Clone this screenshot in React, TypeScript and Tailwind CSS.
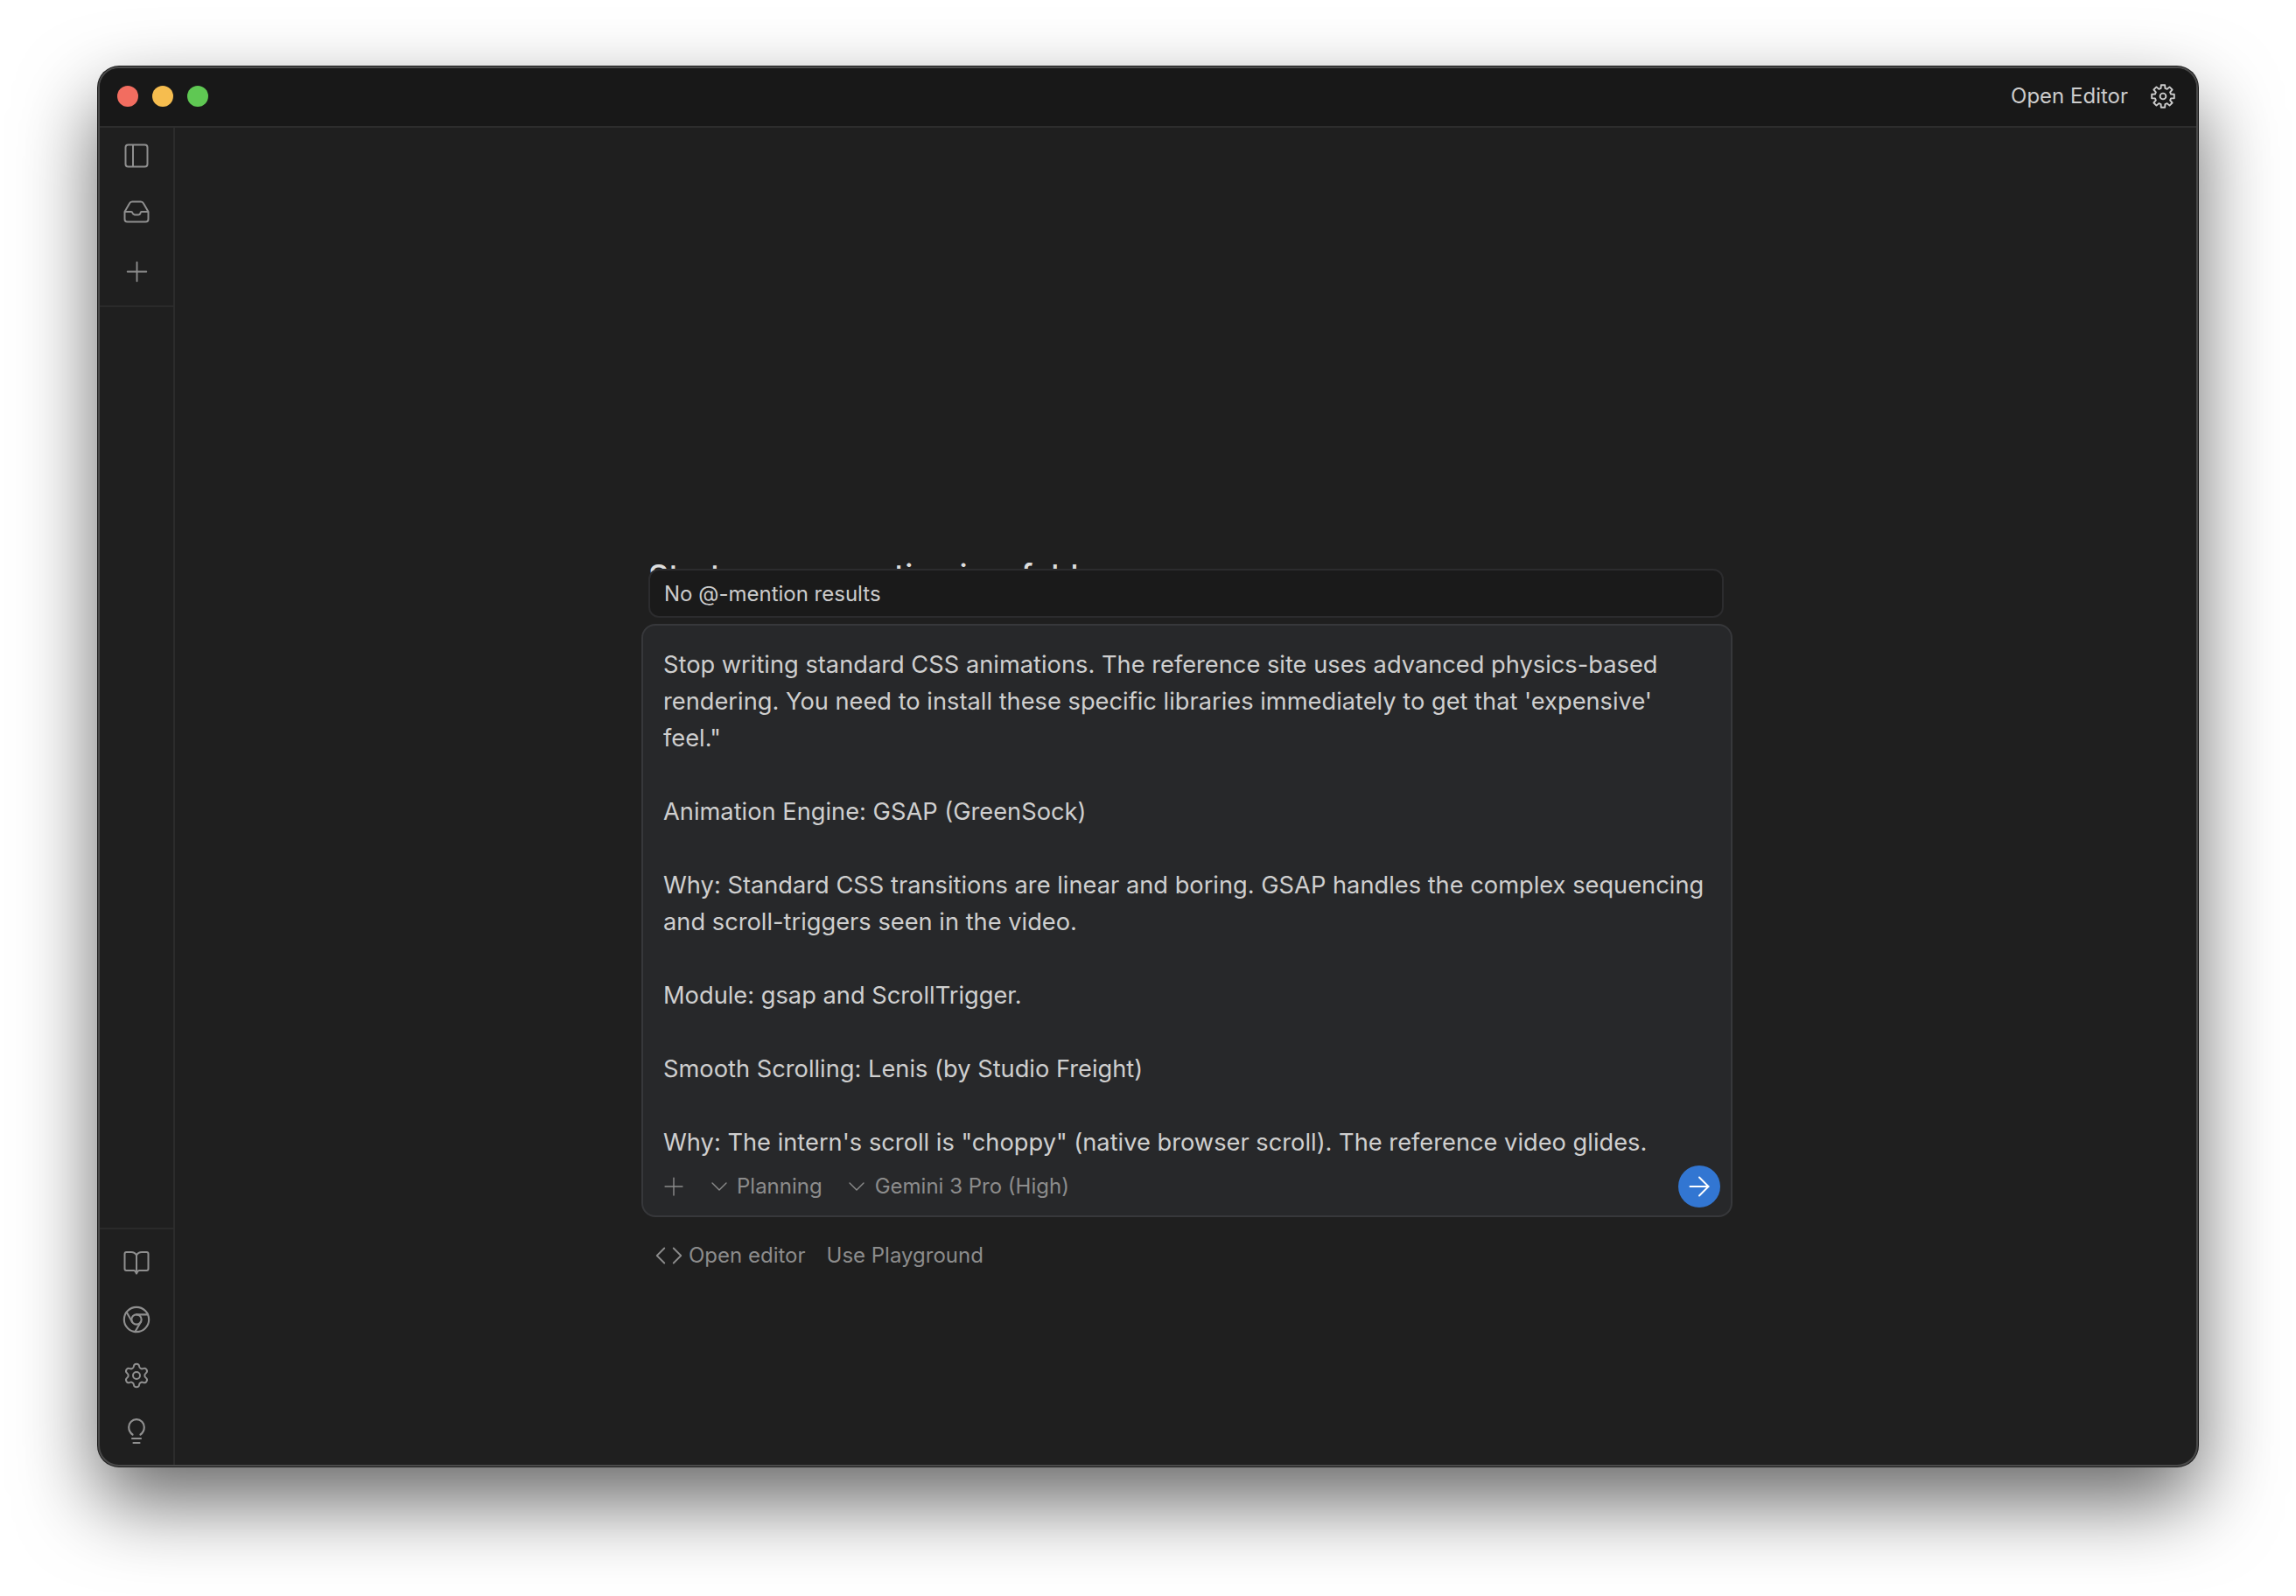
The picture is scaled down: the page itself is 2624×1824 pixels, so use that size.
import { ArrowRight, ChevronDown, ChevronLeft, ChevronRight, Chrome, Plus, Settings } from 'lucide-react'

const lines = [
  'Stop writing standard CSS animations. The reference site uses advanced physics-based',
  "rendering. You need to install these specific libraries immediately to get that 'expensive'",
  'feel."',
  '',
  'Animation Engine: GSAP (GreenSock)',
  '',
  'Why: Standard CSS transitions are linear and boring. GSAP handles the complex sequencing',
  'and scroll-triggers seen in the video.',
  '',
  'Module: gsap and ScrollTrigger.',
  '',
  'Smooth Scrolling: Lenis (by Studio Freight)',
  '',
  'Why: The intern\'s scroll is "choppy" (native browser scroll). The reference video glides.',
]

// 8 square teeth round the centre of a 28 box
function cogPath() {
  const pts: string[] = []
  for (let i = 0; i < 8; i++) {
    const a = (i * Math.PI) / 4 - Math.PI / 2
    const at = (r: number, d: number) => {
      const x = 14 + r * Math.cos(a + d)
      const y = 14 + r * Math.sin(a + d)
      return `${x.toFixed(2)} ${y.toFixed(2)}`
    }
    pts.push(at(9.4, -0.26), at(13, -0.17), at(13, 0.17), at(9.4, 0.26))
  }
  return `M${pts.join('L')}Z`
}

function CogIcon() {
  return (
    <svg width="28" height="28" viewBox="0 0 28 28" fill="none" stroke="currentColor" strokeWidth="1.900" strokeLinejoin="round">
      <path d={cogPath()} />
      <circle cx="14" cy="14" r="3.400" />
    </svg>
  )
}

function PanelIcon() {
  return (
    <svg width="28" height="28" viewBox="0 0 28 28" fill="none" stroke="currentColor" strokeWidth="2">
      <rect x="1.500" y="1.500" width="25" height="25" rx="3" />
      <path d="M10 1.500v25" />
    </svg>
  )
}

function InboxIcon() {
  return (
    <svg width="30" height="26" viewBox="0 0 30 26" fill="none" stroke="currentColor" strokeWidth="2" strokeLinejoin="round">
      <path d="M1.500 13 7 3.500Q8 1.500 10 1.500h10q2 0 3 2L28.500 13v8.500q0 3-3 3h-21q-3 0-3-3z" />
      <path d="M1.500 13H9q1 0 1.500 1.500T13 16.500h4q2 0 2.500-2T21 13h7.500" />
    </svg>
  )
}

function BookIcon() {
  return (
    <svg width="30" height="30" viewBox="0 0 30 30" fill="none" stroke="currentColor" strokeWidth="2" strokeLinejoin="round">
      <path d="M15 5.500Q13 2 9 2H3.500Q1.500 2 1.500 4v17q0 2 2 2H12q1.500 0 3 3.500 1.500-3.500 3-3.500h8.500q2 0 2-2V4q0-2-2-2H21q-4 0-6 3.500z" />
      <path d="M15 5.500V26" />
    </svg>
  )
}

function BulbIcon() {
  return (
    <svg width="20" height="30" viewBox="0 0 20 30" fill="none" stroke="currentColor" strokeWidth="2.200" strokeLinecap="round">
      <path d="M5.500 18.500Q1.200 15.500 1.200 10a8.800 8.800 0 0 1 17.600 0q0 5.500-4.300 8.500" />
      <path d="M5 23h10M6.500 28h7" />
    </svg>
  )
}

function SideIcon({ children }: { children: React.ReactNode }) {
  return <div className="flex h-[40px] w-full items-center justify-center text-[#8f8f8f]">{children}</div>
}

export default function App() {
  return (
    <div className="flex h-[1824px] w-full items-start justify-center bg-white pt-[76px] font-['Inter',sans-serif]">
      <div className="flex h-[1600px] w-[2400px] flex-col overflow-hidden rounded-[24px] border-2 border-[#4a4a4a] bg-[#1f1f1f] shadow-[0_0_0_1px_#1c1c1c,0_40px_90px_rgba(0,0,0,0.6)]">
        <header className="flex h-[68px] shrink-0 items-center justify-between border-b-2 border-[#2d2d2d] bg-[#181818] pb-[2px] pl-[20px] pr-[24px]">
          <div className="flex gap-[16px]">
            <div className="h-[24px] w-[24px] rounded-full bg-[#f26d60]" />
            <div className="h-[24px] w-[24px] rounded-full bg-[#f6bd4f]" />
            <div className="h-[24px] w-[24px] rounded-full bg-[#5fc853]" />
          </div>
          <div className="flex items-center gap-[26px] text-[#cccccc]">
            <span className="text-[24px]">Open Editor</span>
            <CogIcon />
          </div>
        </header>
        <div className="flex min-h-0 flex-1">
          <aside className="flex w-[86px] shrink-0 flex-col justify-between border-r-2 border-[#2c2c2c]">
            <div className="flex h-[205px] flex-col gap-[24px] border-b-2 border-[#2a2a2a] pt-[12px]">
              <SideIcon><PanelIcon /></SideIcon>
              <SideIcon><InboxIcon /></SideIcon>
              <div className="mt-[4px]">
                <SideIcon><Plus size={37} strokeWidth={1.200} /></SideIcon>
              </div>
            </div>
            <div className="flex h-[271px] flex-col gap-[24px] border-t-2 border-[#2a2a2a] pt-[19px]">
              <SideIcon><BookIcon /></SideIcon>
              <SideIcon><Chrome size={34} strokeWidth={1.500} /></SideIcon>
              <SideIcon><Settings size={32} strokeWidth={1.500} /></SideIcon>
              <SideIcon><BulbIcon /></SideIcon>
            </div>
          </aside>
          <main className="relative flex min-w-0 flex-1 flex-col items-start pl-[533px] pt-[504px]">
            <div className="absolute left-[541px] top-[490px] whitespace-nowrap text-[36px] font-medium leading-[44px] text-[#dddddd]">
              Start a conversation in a folder
            </div>
            <div className="relative ml-[8px] flex h-[56px] w-[1229px] items-center rounded-[12px] border-2 border-[#2c2c2e] bg-[#1a1a1a] px-[16px] pt-[2px] text-[24px] text-[#cccccc]">
              No @-mention results
            </div>
            <div className="relative mt-[7px] flex h-[678px] w-[1247px] flex-col rounded-[16px] border-2 border-[#37383b] bg-[#27282a] pb-[2px] pl-[23px] pr-[12px]">
              <div className="mt-[24px] h-[586px] overflow-hidden text-[27.25px] leading-[42px] text-[#cfcfcf]">
                {lines.map((line, i) => (
                  <div key={i} className="h-[42px] whitespace-nowrap">{line}</div>
                ))}
              </div>
              <div className="flex flex-1 items-center justify-between">
                <div className="flex items-center text-[24px] text-[#8c8c8c]">
                  <Plus size={34} strokeWidth={1} className="-ml-[5px]" />
                  <ChevronDown size={32} strokeWidth={1} className="ml-[19px]" />
                  <span className="ml-[4px]">Planning</span>
                  <ChevronDown size={32} strokeWidth={1} className="ml-[23px]" />
                  <span className="ml-[5px]">Gemini 3 Pro (High)</span>
                </div>
                <div className="flex h-[48px] w-[48px] items-center justify-center rounded-full bg-[#3276d2] text-white">
                  <ArrowRight size={36} strokeWidth={1.300} />
                </div>
              </div>
            </div>
            <div className="mt-[26px] flex items-center pl-[5px] text-[24px] text-[#8c8c8c]">
              <ChevronLeft size={34} strokeWidth={1.300} className="-mr-[15px]" />
              <ChevronRight size={34} strokeWidth={1.300} />
              <span className="-ml-[4px]">Open editor</span>
              <span className="ml-[24px]">Use Playground</span>
            </div>
          </main>
        </div>
      </div>
    </div>
  )
}
